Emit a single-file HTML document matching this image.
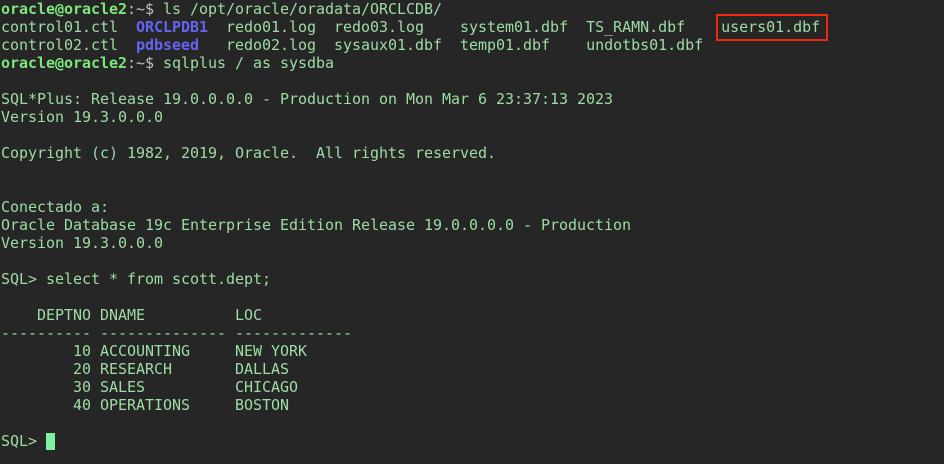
<!DOCTYPE html>
<html><head><style>
html,body{margin:0;padding:0;background:#262626;width:944px;height:464px;overflow:hidden}
pre{margin:0;position:absolute;left:1px;top:0;font-family:"DejaVu Sans Mono","Liberation Mono",monospace;font-size:15px;letter-spacing:-0.03px;line-height:18px;color:#9ddca4;white-space:pre}
.p{color:#7be87b;font-weight:bold}
.c{color:#b9c4c4}
.b{color:#6464f4;font-weight:bold}
.box{position:absolute;left:716px;top:14px;width:108px;height:23px;border:2px solid #f02a10}
.cur{display:inline-block;width:9px;height:17px;background:#7ef0a0;vertical-align:-4px}
</style></head><body>
<pre><span class="p">oracle@oracle2</span><span class="c">:~$</span> ls /opt/oracle/oradata/ORCLCDB/
control01.ctl  <span class="b">ORCLPDB1</span>  redo01.log  redo03.log    system01.dbf  TS_RAMN.dbf    users01.dbf
control02.ctl  <span class="b">pdbseed</span>   redo02.log  sysaux01.dbf  temp01.dbf    undotbs01.dbf
<span class="p">oracle@oracle2</span><span class="c">:~$</span> sqlplus / as sysdba

SQL*Plus: Release 19.0.0.0.0 - Production on Mon Mar 6 23:37:13 2023
Version 19.3.0.0.0

Copyright (c) 1982, 2019, Oracle.  All rights reserved.


Conectado a:
Oracle Database 19c Enterprise Edition Release 19.0.0.0.0 - Production
Version 19.3.0.0.0

SQL&gt; select * from scott.dept;

    DEPTNO DNAME          LOC
---------- -------------- -------------
        10 ACCOUNTING     NEW YORK
        20 RESEARCH       DALLAS
        30 SALES          CHICAGO
        40 OPERATIONS     BOSTON

SQL&gt; <span class="cur"></span></pre>
<div class="box"></div>
</body></html>
